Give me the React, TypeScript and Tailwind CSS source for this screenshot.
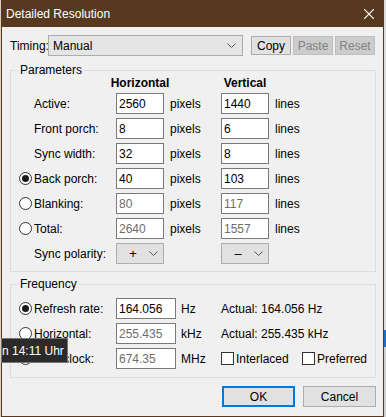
import React from "react";

type ParamRow = {
  label: string;
  h: string;
  v: string;
  radio?: boolean;
  checked?: boolean;
  disabled?: boolean;
};

const paramRows: ParamRow[] = [
  { label: "Active:", h: "2560", v: "1440" },
  { label: "Front porch:", h: "8", v: "6" },
  { label: "Sync width:", h: "32", v: "8" },
  { label: "Back porch:", h: "40", v: "103", radio: true, checked: true },
  { label: "Blanking:", h: "80", v: "117", radio: true, disabled: true },
  { label: "Total:", h: "2640", v: "1557", radio: true, disabled: true },
];

function Radio({ checked }: { checked?: boolean }) {
  return (
    <span className="flex h-[13px] w-[13px] items-center justify-center rounded-full border border-[#333333] bg-white">
      {checked && <span className="h-[7px] w-[7px] rounded-full bg-[#1a1a1a]" />}
    </span>
  );
}

function Checkbox() {
  return <span className="h-[13px] w-[13px] border border-[#333333] bg-white" />;
}

function Field({ value, disabled, wide }: { value: string; disabled?: boolean; wide?: boolean }) {
  return (
    <div
      className={`flex h-[21px] items-center border border-[#7a7a7a] bg-white pl-[2px] ${
        wide ? "w-[60px]" : "w-[48px]"
      } ${disabled ? "text-[#6d6d6d]" : "text-black"}`}
    >
      {value}
    </div>
  );
}

function Chevron() {
  return (
    <svg width="9" height="5" viewBox="0 0 9 5" className="text-[#555555]">
      <path d="M0.5 0.5 L4.5 4.5 L8.5 0.5" fill="none" stroke="currentColor" strokeWidth="1" />
    </svg>
  );
}

function PolaritySelect({ sign }: { sign: string }) {
  return (
    <div className="flex h-[21px] w-[48px] items-center border border-[#adadad] bg-[#e1e1e1]">
      <span className="w-[32px] text-center text-[13px]">{sign}</span>
      <Chevron />
    </div>
  );
}

function Button({ label, disabled }: { label: string; disabled?: boolean }) {
  return (
    <div
      className={`flex h-[19px] w-[40px] items-center justify-center border ${
        disabled ? "border-[#bfbfbf] bg-[#cccccc] text-[#838383]" : "border-[#adadad] bg-[#e1e1e1] text-black"
      }`}
    >
      {label}
    </div>
  );
}

export default function App() {
  return (
    <div className="flex h-[417px] w-[386px] overflow-hidden bg-[#e6e6e6] font-['Liberation_Sans',Arial,sans-serif] text-[12px] leading-[14px] text-black">
      <div className="h-full w-[1px] bg-[#d9cfbf]" />
      <div className="relative flex h-[417px] w-[383px] flex-col border border-[#56391f] bg-[#f0f0f0]">
        {/* title bar */}
        <div className="flex h-[26px] items-center justify-between bg-[#56391f] pl-[4px] pr-[9px] text-white">
          <span className="text-[12px]">Detailed Resolution</span>
          <svg width="10" height="10" viewBox="0 0 10 10">
            <path d="M0 0 L10 10 M10 0 L0 10" stroke="white" strokeWidth="1.2" />
          </svg>
        </div>

        <div className="flex flex-col pl-[8px] pr-[7px] pt-[8px]">
          {/* timing */}
          <div className="flex h-[21px] items-center">
            <span className="w-[38px]">Timing:</span>
            <div className="flex h-[21px] w-[195px] items-center justify-between border border-[#acacac] bg-[#e5e5e5] pl-[4px] pr-[6px]">
              <span>Manual</span>
              <Chevron />
            </div>
            <div className="ml-[8px] flex gap-[2px]">
              <Button label="Copy" />
              <Button label="Paste" disabled />
              <Button label="Reset" disabled />
            </div>
          </div>

          {/* parameters */}
          <fieldset className="mt-[7px] border border-[#dcdcdc] px-[7px] pb-[7px]">
            <legend className="px-[2px]">Parameters</legend>
            <div className="-mt-[1px] grid h-[17px] grid-cols-[98px_48px_57px_48px] font-bold">
              <span />
              <span className="flex justify-center whitespace-nowrap">Horizontal</span>
              <span />
              <span className="flex justify-center whitespace-nowrap">Vertical</span>
            </div>
            <div className="flex flex-col gap-[4px]">
              {paramRows.map((r) => (
                <div key={r.label} className="grid h-[21px] grid-cols-[98px_48px_57px_48px_1fr] items-center">
                  <div className="flex items-center">
                    <span className="w-[16px] pl-[1px]">{r.radio && <Radio checked={r.checked} />}</span>
                    <span>{r.label}</span>
                  </div>
                  <Field value={r.h} disabled={r.disabled} />
                  <span className="pl-[6px]">pixels</span>
                  <Field value={r.v} disabled={r.disabled} />
                  <span className="pl-[6px]">lines</span>
                </div>
              ))}
              <div className="grid h-[21px] grid-cols-[98px_48px_57px_48px_1fr] items-center">
                <span className="pl-[16px]">Sync polarity:</span>
                <PolaritySelect sign="+" />
                <span />
                <PolaritySelect sign="–" />
              </div>
            </div>
          </fieldset>

          {/* frequency */}
          <fieldset className="mt-[5px] border border-[#dcdcdc] px-[7px] pb-[8px]">
            <legend className="px-[2px]">Frequency</legend>
            <div className="mt-[7px] flex flex-col gap-[4px]">
              <div className="grid h-[21px] grid-cols-[98px_60px_45px_1fr] items-center">
                <div className="flex items-center">
                  <span className="w-[16px] pl-[1px]">
                    <Radio checked />
                  </span>
                  <span>Refresh rate:</span>
                </div>
                <Field value="164.056" wide />
                <span className="pl-[5px]">Hz</span>
                <span>Actual: 164.056 Hz</span>
              </div>
              <div className="grid h-[21px] grid-cols-[98px_60px_45px_1fr] items-center">
                <div className="flex items-center">
                  <span className="w-[16px] pl-[1px]">
                    <Radio />
                  </span>
                  <span>Horizontal:</span>
                </div>
                <Field value="255.435" wide disabled />
                <span className="pl-[5px]">kHz</span>
                <span>Actual: 255.435 kHz</span>
              </div>
              <div className="grid h-[21px] grid-cols-[98px_60px_45px_1fr] items-center">
                <div className="flex items-center">
                  <span className="w-[16px] pl-[1px]">
                    <Radio />
                  </span>
                  <span>Pixel clock:</span>
                </div>
                <Field value="674.35" wide disabled />
                <span className="pl-[5px]">MHz</span>
                <div className="flex items-center">
                  <div className="flex w-[81px] items-center gap-[2px]">
                    <Checkbox />
                    <span>Interlaced</span>
                  </div>
                  <div className="flex items-center gap-[2px]">
                    <Checkbox />
                    <span>Preferred</span>
                  </div>
                </div>
              </div>
            </div>
          </fieldset>

          {/* buttons */}
          <div className="mt-[8px] flex justify-end gap-[8px]">
            <div className="flex h-[21px] w-[73px] items-center justify-center border-2 border-[#0078d7] bg-[#e1e1e1]">
              OK
            </div>
            <div className="flex h-[21px] w-[73px] items-center justify-center border border-[#adadad] bg-[#e1e1e1]">
              Cancel
            </div>
          </div>
        </div>

        {/* tooltip from the window below */}
        <div className="absolute left-[-1px] top-[337px] flex h-[25px] w-[67px] items-center border border-[#767676] bg-[#2b2b2b] text-white">
          <span className="whitespace-nowrap">n 14:11 Uhr</span>
        </div>
      </div>
      <div className="flex w-[2px] flex-col">
        <div className="h-[330px] bg-[#dcdcdc]" />
        <div className="h-[17px] bg-[#1e6fc8]" />
        <div className="flex-1 bg-[#d0d0d0]" />
      </div>
    </div>
  );
}
